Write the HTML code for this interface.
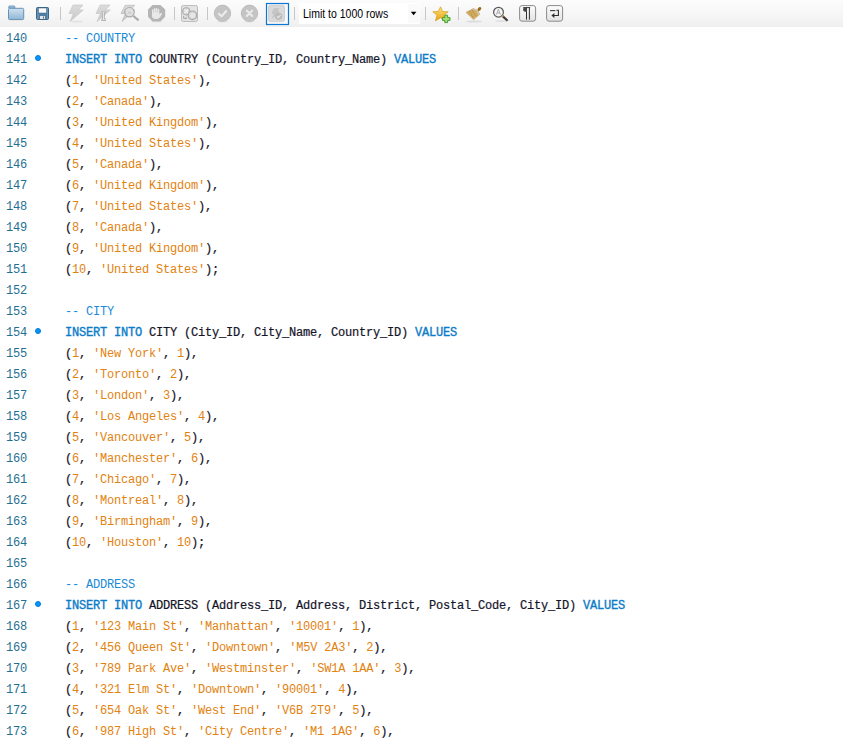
<!DOCTYPE html>
<html><head><meta charset="utf-8"><style>
html,body{margin:0;padding:0;width:843px;height:743px;overflow:hidden;background:#fff;}
#tb{position:absolute;left:0;top:0;width:843px;height:27px;background:linear-gradient(#fcfcfc,#f6f6f6 55%,#efefef);}
.ln{position:absolute;left:0;height:21px;width:843px;font-family:"Liberation Mono",monospace;font-size:12px;letter-spacing:-0.2px;line-height:21px;white-space:pre;color:#141428;}
.num{position:absolute;left:6px;color:#1f6f93;}
.dot{position:absolute;left:35px;top:5px;width:6px;height:6px;box-sizing:border-box;border-radius:50%;background:#0096ff;border:1px solid #0a78d8;}
.code{position:absolute;left:65px;}
.c{color:#1a8ad8;}
.k{color:#0a7cc8;-webkit-text-stroke:0.35px #0a7cc8;}
.s,.n{color:#e2820f;}
#lim{position:absolute;left:302.5px;top:6px;font-family:"Liberation Sans",sans-serif;font-size:12px;line-height:16px;color:#000;white-space:nowrap;transform:scaleX(0.875);transform-origin:0 0;}
.code{-webkit-text-stroke:0.2px #141428;}
.c,.s,.n{-webkit-text-stroke:0;}
</style></head><body>
<div id="tb"><svg width="843" height="27" viewBox="0 0 843 27" style="position:absolute;left:0;top:0">
<defs>
<linearGradient id="gFold" x1="0" y1="0" x2="0" y2="1"><stop offset="0" stop-color="#cfe2f1"/><stop offset="1" stop-color="#8fb5d4"/></linearGradient>
<linearGradient id="gBolt" x1="0" y1="0" x2="0" y2="1"><stop offset="0" stop-color="#dcdcdc"/><stop offset="1" stop-color="#c8c8c8"/></linearGradient>
<linearGradient id="gBtn" x1="0" y1="0" x2="0" y2="1"><stop offset="0" stop-color="#fdfdfd"/><stop offset="1" stop-color="#e2e2e2"/></linearGradient>
<linearGradient id="gStar" x1="0" y1="0" x2="0" y2="1"><stop offset="0" stop-color="#ffe680"/><stop offset="1" stop-color="#e8a010"/></linearGradient>
</defs>
<!-- folder -->
<path d="M8.8,8 L8.8,6.6 Q8.8,6 9.4,6 L14.2,6 Q14.8,6 14.8,6.6 L14.8,8 Z" fill="#a9c8e2" stroke="#6a94b8" stroke-width="0.9"/>
<rect x="8.5" y="8.3" width="15.2" height="11.3" rx="1.2" fill="url(#gFold)" stroke="#6690b4" stroke-width="1"/>
<!-- save -->
<rect x="36.5" y="7.5" width="12" height="12" rx="1" fill="#4f7ea4" stroke="#3a6586" stroke-width="1"/>
<rect x="37.5" y="8" width="1" height="11" fill="#7aa0bf"/>
<rect x="47" y="8" width="1" height="11" fill="#6a93b4"/>
<rect x="38.5" y="8" width="8" height="5" fill="#fafafa" stroke="#3a6586" stroke-width="0.5"/>
<rect x="40" y="16" width="5" height="3" fill="#e6e6e6"/>
<rect x="43" y="16.5" width="1" height="2" fill="#52606c"/>
<!-- sep -->
<rect x="60" y="7" width="1" height="13" fill="#c6c6c6"/>
<!-- bolt 1 -->
<ellipse cx="77" cy="21.5" rx="6" ry="1" fill="#000" opacity="0.06"/>
<path d="M73,5 L83,5 L78.5,10 L83.3,10 L70,21.5 L73.5,13.5 L69,13.5 Z" fill="url(#gBolt)" stroke="#c2c2c2" stroke-width="0.6"/>
<!-- bolt 2 with cursor -->
<path d="M100,5 L110,5 L105.5,10 L110.3,10 L97,21.5 L100.5,13.5 L96,13.5 Z" fill="url(#gBolt)" stroke="#c2c2c2" stroke-width="0.6"/>
<path d="M101.3,12 L105.8,12 M103.55,12 L103.55,19.8 M101.3,19.8 L105.8,19.8" stroke="#9c9c9c" stroke-width="2.2" fill="none"/>
<path d="M101.3,12 L105.8,12 M103.55,12 L103.55,19.8 M101.3,19.8 L105.8,19.8" stroke="#f2f2f2" stroke-width="0.9" fill="none"/>
<!-- bolt 3 with magnifier -->
<path d="M125.2,5.3 L134.8,5.3 L130.3,10 L134.8,10 L122,21.5 L125.5,13.5 L121,13.5 Z" fill="url(#gBolt)" stroke="#b8b8b8" stroke-width="0.7"/>
<circle cx="129.5" cy="12.2" r="4.7" fill="#e0e0e0" stroke="#a9a9a9" stroke-width="1.2"/><path d="M127.5,14.5 Q129.5,9 131.5,14.5 M128,12.8 L131,12.8" stroke="#c4c4c4" stroke-width="0.7" fill="none"/>
<path d="M133.2,15.9 L138.6,20.4" stroke="#acacac" stroke-width="2.1"/>
<!-- stop -->
<ellipse cx="156.6" cy="21.8" rx="6" ry="0.8" fill="#000" opacity="0.05"/>
<path d="M152.6,5 L160.4,5 L165.2,9.6 L165.2,16.8 L160.4,21.6 L152.6,21.6 L148,16.8 L148,9.6 Z" fill="#b5b5b5"/>
<g fill="#e9e9e9">
<rect x="152" y="9.2" width="1.55" height="6" rx="0.75"/>
<rect x="153.9" y="8" width="1.55" height="6" rx="0.75"/>
<rect x="155.8" y="8" width="1.55" height="6" rx="0.75"/>
<rect x="157.7" y="8.8" width="1.55" height="6" rx="0.75"/>
<path d="M152,12.5 L159.25,12.5 L159.25,14.4 Q160.6,12.7 161.6,12.7 Q162.5,12.9 162,14.1 Q160.6,17.3 158.6,18.5 Q157.6,19 155.8,19 Q152,19 152,15.8 Z"/>
</g>
<!-- sep -->
<rect x="174" y="7" width="1" height="13" fill="#c6c6c6"/>
<!-- toggle -->
<rect x="181.5" y="5.5" width="16" height="16" rx="1.8" fill="#e4e4e4" stroke="#bcbcbc" stroke-width="1"/>
<circle cx="186.3" cy="11.3" r="3.8" fill="#d0d0d0" stroke="#acacac" stroke-width="1"/>
<path d="M184.3,9.3 L188.3,13.3 M188.3,9.3 L184.3,13.3" stroke="#f4f4f4" stroke-width="1.3"/>
<circle cx="192.4" cy="15.3" r="4.3" fill="#d6d6d6" stroke="#aaaaaa" stroke-width="1.2"/><circle cx="192.6" cy="15.4" r="2.6" fill="#e6e6e6"/>
<path d="M183.6,15.8 L183.6,18.3 L186,18.3" stroke="#a6a6a6" stroke-width="1" fill="none"/><path d="M187.2,18.3 L185.6,16.8 L185.6,19.8 Z" fill="#a6a6a6"/>
<!-- sep -->
<rect x="207" y="7" width="1" height="13" fill="#c6c6c6"/>
<!-- check circle -->
<ellipse cx="222.5" cy="21.6" rx="6" ry="0.9" fill="#000" opacity="0.05"/>
<circle cx="222.5" cy="13.3" r="8.2" fill="#c4c4c4" stroke="#b6b6b6" stroke-width="0.8"/>
<path d="M219,13.9 L221.6,16.3 L226.2,11" stroke="#ededed" stroke-width="2" fill="none" stroke-linecap="round" stroke-linejoin="round"/>
<!-- x circle -->
<ellipse cx="249.5" cy="21.6" rx="6" ry="0.9" fill="#000" opacity="0.05"/>
<circle cx="249.5" cy="13.3" r="8.2" fill="#c4c4c4" stroke="#b6b6b6" stroke-width="0.8"/>
<path d="M246.8,10.6 L252.2,16 M252.2,10.6 L246.8,16" stroke="#ededed" stroke-width="1.9" stroke-linecap="round"/>
<!-- autocommit selected -->
<rect x="266.5" y="3.5" width="22" height="21" fill="#f8f8f8" stroke="#0b78d8" stroke-width="1.2"/>
<rect x="268.5" y="5.3" width="16" height="16.3" rx="2" fill="#d9d9d9" stroke="#c8c8c8" stroke-width="0.8"/>
<path d="M274,8.5 L279,8.5 L276.8,11.5 L279.2,11.5 L272.5,18 L274.3,13.5 L272,13.5 Z" fill="#c6c6c6" stroke="#bababa" stroke-width="0.5"/>
<circle cx="278.7" cy="16.3" r="3.6" fill="#bcbcbc"/>
<path d="M277,16.4 L278.3,17.6 L280.6,15" stroke="#e8e8e8" stroke-width="1.1" fill="none"/>
<!-- sep -->
<rect x="294" y="7" width="1" height="13" fill="#c6c6c6"/>
<!-- dropdown -->
<rect x="299" y="3" width="121" height="21" fill="#ffffff"/>
<rect x="408" y="4" width="11.5" height="19" fill="#fafafa"/>
<path d="M410.8,11.8 L416.4,11.8 L413.6,15.3 Z" fill="#000"/>
<!-- sep -->
<rect x="425" y="7" width="1" height="13" fill="#c6c6c6"/>
<!-- star plus -->
<path d="M440.5,6.8 L442.6,11.5 L448.2,11.8 L444,15.2 L445.5,20.8 L440.5,17.8 L435.5,20.8 L437,15.2 L432.8,11.8 L438.4,11.5 Z" fill="url(#gStar)" stroke="#d49a18" stroke-width="0.7" stroke-linejoin="round"/>
<path d="M444.8,15.2 L447.6,15.2 L447.6,17.6 L450,17.6 L450,20.4 L447.6,20.4 L447.6,22.6 L444.8,22.6 L444.8,20.4 L442.4,20.4 L442.4,17.6 L444.8,17.6 Z" fill="#9ee07a" stroke="#4c9a2c" stroke-width="1"/>
<!-- sep -->
<rect x="458" y="7" width="1" height="13" fill="#c6c6c6"/>
<!-- broom -->
<ellipse cx="474" cy="21.5" rx="8" ry="1" fill="#000" opacity="0.09"/>
<path d="M466,12.4 L473.4,8.6 L478.2,10.6 L479.6,14.4 L473.6,19.6 Z" fill="#dcb868" stroke="#b08a48" stroke-width="0.5" stroke-linejoin="round"/>
<path d="M467.5,12.6 L474.5,9.8 M468.8,14 L476,11.2 M470.3,15.5 L477.2,12.8 M471.8,17.1 L478.2,14.4 M469.5,11.5 L473.8,18.5 M472,10.3 L476.2,16.8" stroke="#a88040" stroke-width="0.6" fill="none" opacity="0.8"/>
<path d="M473.4,8.6 L478.2,10.6 L479.6,14.4 L478.2,15.6 L477.2,11.6 L472.6,9.2 Z" fill="#cfc6b4"/>
<ellipse cx="479.4" cy="9" rx="1.6" ry="2.2" transform="rotate(40 479.4 9)" fill="#9c6c1e"/>
<!-- magnifier A -->
<ellipse cx="501" cy="21" rx="6" ry="1" fill="#000" opacity="0.07"/>
<circle cx="498.5" cy="12.2" r="4.9" fill="#f6f6f6" stroke="#585858" stroke-width="1.2"/>
<path d="M496.4,14.6 L498.4,9.2 L500.4,14.6 M497.2,13 L499.6,13" stroke="#9c9c9c" stroke-width="0.8" fill="none"/>
<path d="M502.3,15.9 L507.6,20.8" stroke="#3c3c3c" stroke-width="2.2"/>
<path d="M502,15.6 L503.2,16.7" stroke="#c8a050" stroke-width="2.2"/>
<!-- pilcrow btn -->
<rect x="519.6" y="5.6" width="16" height="15.6" rx="2.4" fill="url(#gBtn)" stroke="#8a8a8a" stroke-width="1"/>
<path d="M523.2,7.6 L530.2,7.6" stroke="#3a3a3a" stroke-width="1"/>
<path d="M526.5,7.6 L526.5,19.6 M529.4,7.6 L529.4,19.6" stroke="#2e2e2e" stroke-width="1" fill="none"/>
<path d="M526.6,7.2 Q523,7.2 523,9.6 Q523,12 526.6,12 Z" fill="#4a4a4a"/>
<!-- wrap btn -->
<rect x="546.6" y="5.6" width="16" height="15.6" rx="2.4" fill="url(#gBtn)" stroke="#8a8a8a" stroke-width="1"/>
<path d="M550,10.6 L555.4,10.6" stroke="#3a3a3a" stroke-width="1.1"/>
<path d="M556.4,10.2 L558.4,10.2 L558.4,15.5 L553,15.5" stroke="#2e2e2e" stroke-width="1.1" fill="none"/>
<path d="M551.4,15.5 L554.4,13 L554.4,18 Z" fill="#2e2e2e"/>
</svg><div id="lim">Limit to 1000 rows</div></div>

<div class="ln" style="top:29px"><span class="num">140</span><span class="code"><span class="c">-- COUNTRY</span></span></div>
<div class="ln" style="top:50px"><span class="num">141</span><i class="dot"></i><span class="code"><span class="k">INSERT INTO</span> COUNTRY (Country_ID, Country_Name) <span class="k">VALUES</span></span></div>
<div class="ln" style="top:71px"><span class="num">142</span><span class="code">(<span class="n">1</span>, <span class="s">'United States'</span>),</span></div>
<div class="ln" style="top:92px"><span class="num">143</span><span class="code">(<span class="n">2</span>, <span class="s">'Canada'</span>),</span></div>
<div class="ln" style="top:113px"><span class="num">144</span><span class="code">(<span class="n">3</span>, <span class="s">'United Kingdom'</span>),</span></div>
<div class="ln" style="top:134px"><span class="num">145</span><span class="code">(<span class="n">4</span>, <span class="s">'United States'</span>),</span></div>
<div class="ln" style="top:155px"><span class="num">146</span><span class="code">(<span class="n">5</span>, <span class="s">'Canada'</span>),</span></div>
<div class="ln" style="top:176px"><span class="num">147</span><span class="code">(<span class="n">6</span>, <span class="s">'United Kingdom'</span>),</span></div>
<div class="ln" style="top:197px"><span class="num">148</span><span class="code">(<span class="n">7</span>, <span class="s">'United States'</span>),</span></div>
<div class="ln" style="top:218px"><span class="num">149</span><span class="code">(<span class="n">8</span>, <span class="s">'Canada'</span>),</span></div>
<div class="ln" style="top:239px"><span class="num">150</span><span class="code">(<span class="n">9</span>, <span class="s">'United Kingdom'</span>),</span></div>
<div class="ln" style="top:260px"><span class="num">151</span><span class="code">(<span class="n">10</span>, <span class="s">'United States'</span>);</span></div>
<div class="ln" style="top:281px"><span class="num">152</span><span class="code"></span></div>
<div class="ln" style="top:302px"><span class="num">153</span><span class="code"><span class="c">-- CITY</span></span></div>
<div class="ln" style="top:323px"><span class="num">154</span><i class="dot"></i><span class="code"><span class="k">INSERT INTO</span> CITY (City_ID, City_Name, Country_ID) <span class="k">VALUES</span></span></div>
<div class="ln" style="top:344px"><span class="num">155</span><span class="code">(<span class="n">1</span>, <span class="s">'New York'</span>, <span class="n">1</span>),</span></div>
<div class="ln" style="top:365px"><span class="num">156</span><span class="code">(<span class="n">2</span>, <span class="s">'Toronto'</span>, <span class="n">2</span>),</span></div>
<div class="ln" style="top:386px"><span class="num">157</span><span class="code">(<span class="n">3</span>, <span class="s">'London'</span>, <span class="n">3</span>),</span></div>
<div class="ln" style="top:407px"><span class="num">158</span><span class="code">(<span class="n">4</span>, <span class="s">'Los Angeles'</span>, <span class="n">4</span>),</span></div>
<div class="ln" style="top:428px"><span class="num">159</span><span class="code">(<span class="n">5</span>, <span class="s">'Vancouver'</span>, <span class="n">5</span>),</span></div>
<div class="ln" style="top:449px"><span class="num">160</span><span class="code">(<span class="n">6</span>, <span class="s">'Manchester'</span>, <span class="n">6</span>),</span></div>
<div class="ln" style="top:470px"><span class="num">161</span><span class="code">(<span class="n">7</span>, <span class="s">'Chicago'</span>, <span class="n">7</span>),</span></div>
<div class="ln" style="top:491px"><span class="num">162</span><span class="code">(<span class="n">8</span>, <span class="s">'Montreal'</span>, <span class="n">8</span>),</span></div>
<div class="ln" style="top:512px"><span class="num">163</span><span class="code">(<span class="n">9</span>, <span class="s">'Birmingham'</span>, <span class="n">9</span>),</span></div>
<div class="ln" style="top:533px"><span class="num">164</span><span class="code">(<span class="n">10</span>, <span class="s">'Houston'</span>, <span class="n">10</span>);</span></div>
<div class="ln" style="top:554px"><span class="num">165</span><span class="code"></span></div>
<div class="ln" style="top:575px"><span class="num">166</span><span class="code"><span class="c">-- ADDRESS</span></span></div>
<div class="ln" style="top:596px"><span class="num">167</span><i class="dot"></i><span class="code"><span class="k">INSERT INTO</span> ADDRESS (Address_ID, Address, District, Postal_Code, City_ID) <span class="k">VALUES</span></span></div>
<div class="ln" style="top:617px"><span class="num">168</span><span class="code">(<span class="n">1</span>, <span class="s">'123 Main St'</span>, <span class="s">'Manhattan'</span>, <span class="s">'10001'</span>, <span class="n">1</span>),</span></div>
<div class="ln" style="top:638px"><span class="num">169</span><span class="code">(<span class="n">2</span>, <span class="s">'456 Queen St'</span>, <span class="s">'Downtown'</span>, <span class="s">'M5V 2A3'</span>, <span class="n">2</span>),</span></div>
<div class="ln" style="top:659px"><span class="num">170</span><span class="code">(<span class="n">3</span>, <span class="s">'789 Park Ave'</span>, <span class="s">'Westminster'</span>, <span class="s">'SW1A 1AA'</span>, <span class="n">3</span>),</span></div>
<div class="ln" style="top:680px"><span class="num">171</span><span class="code">(<span class="n">4</span>, <span class="s">'321 Elm St'</span>, <span class="s">'Downtown'</span>, <span class="s">'90001'</span>, <span class="n">4</span>),</span></div>
<div class="ln" style="top:701px"><span class="num">172</span><span class="code">(<span class="n">5</span>, <span class="s">'654 Oak St'</span>, <span class="s">'West End'</span>, <span class="s">'V6B 2T9'</span>, <span class="n">5</span>),</span></div>
<div class="ln" style="top:722px"><span class="num">173</span><span class="code">(<span class="n">6</span>, <span class="s">'987 High St'</span>, <span class="s">'City Centre'</span>, <span class="s">'M1 1AG'</span>, <span class="n">6</span>),</span></div>
</body></html>
